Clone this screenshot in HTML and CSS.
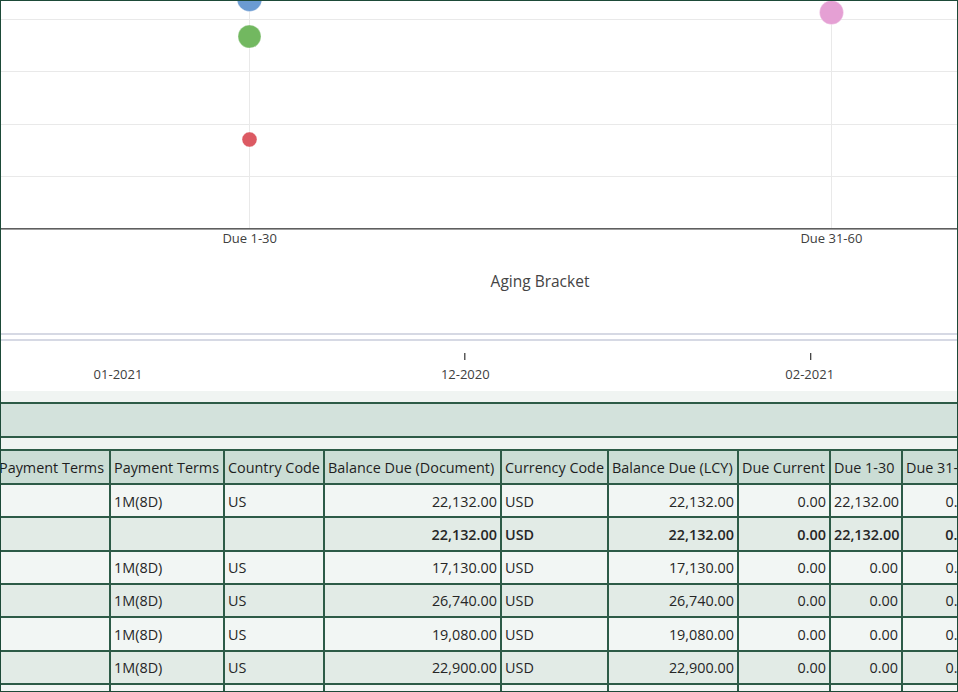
FILE: index.html
```html
<!DOCTYPE html>
<html lang="en">
<head>
<meta charset="utf-8">
<title>Aging Report</title>
<link rel="stylesheet" href="styles.css">
</head>
<body>
<div class="frame">
  <svg class="plot" width="956" height="332" viewBox="0 0 956 332">
    <g class="grid">
      <line x1="0" y1="18.5" x2="956" y2="18.5"/>
      <line x1="0" y1="70.5" x2="956" y2="70.5"/>
      <line x1="0" y1="123.5" x2="956" y2="123.5"/>
      <line x1="0" y1="175.5" x2="956" y2="175.5"/>
      <line x1="248.5" y1="0" x2="248.5" y2="227"/>
      <line x1="830.5" y1="0" x2="830.5" y2="227"/>
    </g>
    <rect class="axis" x="0" y="227" width="956" height="1.6"/>
    <circle class="dot blue" cx="248.5" cy="-2" r="12.5"/>
    <circle class="dot green" cx="248.5" cy="35.5" r="11.5"/>
    <circle class="dot red" cx="248.5" cy="138.5" r="7.5"/>
    <circle class="dot pink" cx="830.5" cy="11.5" r="12"/>
    <text class="tick-label" x="248.7" y="241.6" text-anchor="middle">Due 1-30</text>
    <text class="tick-label" x="830.4" y="241.6" text-anchor="middle">Due 31-60</text>
    <text class="axis-title" x="539" y="285.5" text-anchor="middle">Aging Bracket</text>
  </svg>
  <div class="divider"></div>
  <svg class="timeline" width="956" height="50" viewBox="0 0 956 50">
    <line class="tick-mark" x1="463.8" y1="12" x2="463.8" y2="19"/>
    <line class="tick-mark" x1="809.7" y1="12" x2="809.7" y2="19"/>
    <text class="tick-label" x="117" y="37.6" text-anchor="middle">01-2021</text>
    <text class="tick-label" x="464.3" y="37.6" text-anchor="middle">12-2020</text>
    <text class="tick-label" x="808.7" y="37.6" text-anchor="middle">02-2021</text>
  </svg>
  <div class="grid-panel">
    <div class="group-band"></div>
    <div class="table-clip">
      <table class="data">
        <thead>
          <tr>
            <th class="c0">Payment Terms</th>
            <th class="c1">Payment Terms</th>
            <th class="c2">Country Code</th>
            <th class="c3">Balance Due (Document)</th>
            <th class="c4">Currency Code</th>
            <th class="c5">Balance Due (LCY)</th>
            <th class="c6">Due Current</th>
            <th class="c7">Due 1-30</th>
            <th class="c8">Due 31-60</th>
          </tr>
        </thead>
        <tbody>
          <tr>
            <td></td><td>1M(8D)</td><td>US</td><td class="num">22,132.00</td><td>USD</td><td class="num">22,132.00</td><td class="num">0.00</td><td class="num">22,132.00</td><td class="num">0.00</td>
          </tr>
          <tr class="total">
            <td></td><td></td><td></td><td class="num">22,132.00</td><td>USD</td><td class="num">22,132.00</td><td class="num">0.00</td><td class="num">22,132.00</td><td class="num">0.00</td>
          </tr>
          <tr>
            <td></td><td>1M(8D)</td><td>US</td><td class="num">17,130.00</td><td>USD</td><td class="num">17,130.00</td><td class="num">0.00</td><td class="num">0.00</td><td class="num">0.00</td>
          </tr>
          <tr>
            <td></td><td>1M(8D)</td><td>US</td><td class="num">26,740.00</td><td>USD</td><td class="num">26,740.00</td><td class="num">0.00</td><td class="num">0.00</td><td class="num">0.00</td>
          </tr>
          <tr>
            <td></td><td>1M(8D)</td><td>US</td><td class="num">19,080.00</td><td>USD</td><td class="num">19,080.00</td><td class="num">0.00</td><td class="num">0.00</td><td class="num">0.00</td>
          </tr>
          <tr>
            <td></td><td>1M(8D)</td><td>US</td><td class="num">22,900.00</td><td>USD</td><td class="num">22,900.00</td><td class="num">0.00</td><td class="num">0.00</td><td class="num">0.00</td>
          </tr>
          <tr>
            <td></td><td>1M(8D)</td><td>US</td><td class="num">22,900.00</td><td>USD</td><td class="num">22,900.00</td><td class="num">0.00</td><td class="num">0.00</td><td class="num">0.00</td>
          </tr>
        </tbody>
      </table>
    </div>
  </div>
</div>
</body>
</html>
```
FILE: styles.css
```css
html, body {
  margin: 0;
  padding: 0;
  background: #ffffff;
}

.frame {
  box-sizing: border-box;
  width: 958px;
  height: 692px;
  border: 1px solid #1d4a38;
  overflow: hidden;
  background: #ffffff;
  font-family: "Open Sans", "Noto Sans", sans-serif;
}

.plot,
.timeline {
  display: block;
}

.grid line {
  stroke: #e9e9e9;
  stroke-width: 1;
}

.axis {
  fill: #5e5e5e;
}

.dot {
  stroke: rgba(255, 255, 255, 0.35);
  stroke-width: 1;
}
.dot.blue { fill: #6b9bd2; }
.dot.green { fill: #72b860; }
.dot.red { fill: #dc5a63; }
.dot.pink { fill: #e5a0d4; }

.tick-label {
  font-family: "Open Sans", sans-serif;
  font-size: 13px;
  fill: #404040;
}

.axis-title {
  font-family: "Open Sans", sans-serif;
  font-size: 15.5px;
  fill: #444444;
}

.tick-mark {
  stroke: #333333;
  stroke-width: 1.2;
}

.divider {
  height: 4px;
  border-top: 2px solid #d6d9e4;
  border-bottom: 2px solid #d6d9e4;
}

.grid-panel {
  background: #f0f4f2;
  padding-top: 11px;
}

.group-band {
  height: 32px;
  background: #d3e2dc;
  border-top: 2px solid #2d5b47;
  border-bottom: 2px solid #2d5b47;
  margin-bottom: 11px;
}

.table-clip {
  overflow: hidden;
}

.data {
  border-collapse: separate;
  border-spacing: 0;
  table-layout: fixed;
  width: 983px;
  margin-left: -5px;
  border-top: 2px solid #2d5b47;
  font-family: "Open Sans", sans-serif;
  font-size: 14.4px;
  color: #262626;
}

.data th,
.data td {
  box-sizing: border-box;
  padding: 0 3px;
  border-right: 2px solid #2d5b47;
  border-bottom: 2px solid #2d5b47;
  white-space: nowrap;
  overflow: hidden;
  text-align: left;
}

.data th {
  font-weight: 400;
  padding-top: 2px;
  line-height: 30px;
  background: #cbddd5;
  color: #1e1e1e;
}

.data td {
  padding-top: 1.5px;
  line-height: 29.83px;
}

.data tbody tr:nth-child(odd) td { background: #f2f6f4; }
.data tbody tr:nth-child(even) td { background: #e2ebe6; }

.data td.num {
  text-align: right;
}

.data tr.total td {
  font-weight: 600;
}

.c0 { width: 115px; }
.c1 { width: 114px; }
.c2 { width: 100px; }
.c3 { width: 177px; }
.c4 { width: 107px; }
.c5 { width: 130px; }
.c6 { width: 92px; }
.c7 { width: 72px; }
.c8 { width: 76px; }
```
